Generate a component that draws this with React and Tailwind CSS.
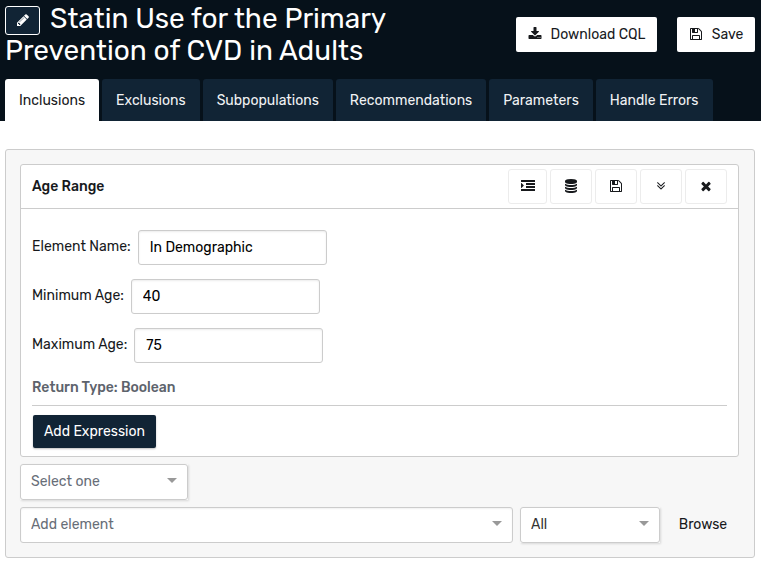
import React from "react";

const ICONS = {
  pencil:
    "M491 1536l91-91-235-235-91 91v107h128v128h107zm523-928q0-22-22-22-10 0-17 7l-542 542q-7 7-7 17 0 22 22 22 10 0 17-7l542-542q7-7 7-17zm-54-192l416 416-832 832h-416v-416zm683 96q0 53-37 90l-166 166-416-416 166-165q36-38 90-38 53 0 91 38l235 234q37 39 37 91z",
  download:
    "M1344 1344q0-26-19-45t-45-19-45 19-19 45 19 45 45 19 45-19 19-45zm256 0q0-26-19-45t-45-19-45 19-19 45 19 45 45 19 45-19 19-45zm128-224v320q0 40-28 68t-68 28h-1472q-40 0-68-28t-28-68v-320q0-40 28-68t68-28h465l135 136q58 56 136 56t136-56l136-136h464q40 0 68 28t28 68zm-325-569q17 41-14 70l-448 448q-18 19-45 19t-45-19l-448-448q-31-29-14-70 17-39 59-39h256v-448q0-26 19-45t45-19h256q26 0 45 19t19 45v448h256q42 0 59 39z",
  save: "M512 1536h768v-384h-768v384zm896 0h128v-896q0-14-10-38.5t-20-34.5l-281-281q-10-10-34-20t-39-10v416q0 40-28 68t-68 28h-576q-40 0-68-28t-28-68v-416h-128v1280h128v-416q0-40 28-68t68-28h832q40 0 68 28t28 68v416zm-384-928v-320q0-13-9.5-22.5t-22.5-9.5h-192q-13 0-22.5 9.5t-9.5 22.5v320q0 13 9.5 22.5t22.5 9.5h192q13 0 22.5-9.5t9.5-22.5zm640 32v928q0 40-28 68t-68 28h-1344q-40 0-68-28t-28-68v-1344q0-40 28-68t68-28h928q40 0 88 20t76 48l280 280q28 28 48 76t20 88z",
  indent:
    "M352 832q0 14-9 23l-288 288q-9 9-23 9-13 0-22.5-9.5t-9.5-22.5v-576q0-13 9.5-22.5t22.5-9.5q14 0 23 9l288 288q9 9 9 23zM32 1280h1728q32 0 32 32v192q0 32-32 32h-1728q-32 0-32-32v-192q0-32 32-32zM672 896h1088q32 0 32 32v192q0 32-32 32h-1088q-32 0-32-32v-192q0-32 32-32zM672 512h1088q32 0 32 32v192q0 32-32 32h-1088q-32 0-32-32v-192q0-32 32-32zM32 128h1728q32 0 32 32v192q0 32-32 32h-1728q-32 0-32-32v-192q0-32 32-32z",
  database:
    "M896 768q237 0 443-43t325-127v170q0 69-103 128t-280 93.5-385 34.5-385-34.5-280-93.5-103-128v-170q119 84 325 127t443 43zm0 768q237 0 443-43t325-127v170q0 69-103 128t-280 93.5-385 34.5-385-34.5-280-93.5-103-128v-170q119 84 325 127t443 43zm0-384q237 0 443-43t325-127v170q0 69-103 128t-280 93.5-385 34.5-385-34.5-280-93.5-103-128v-170q119 84 325 127t443 43zm0-1152q208 0 385 34.5t280 93.5 103 128v128q0 69-103 128t-280 93.5-385 34.5-385-34.5-280-93.5-103-128v-128q0-69 103-128t280-93.5 385-34.5z",
  collapse:
    "M1395 864q0 13-10 23l-466 466q-10 10-23 10t-23-10l-466-466q-10-10-10-23t10-23l50-50q10-10 23-10t23 10l393 393 393-393q10-10 23-10t23 10l50 50q10 10 10 23zm0-384q0 13-10 23l-466 466q-10 10-23 10t-23-10l-466-466q-10-10-10-23t10-23l50-50q10-10 23-10t23 10l393 393 393-393q10-10 23-10t23 10l50 50q10 10 10 23z",
  close:
    "M1490 1322q0 40-28 68l-136 136q-28 28-68 28t-68-28l-294-294-294 294q-28 28-68 28t-68-28l-136-136q-28-28-28-68t28-68l294-294-294-294q-28-28-28-68t28-68l136-136q28-28 68-28t68 28l294 294 294-294q28-28 68-28t68 28l136 136q28 28 28 68t-28 68l-294 294 294 294q28 28 28 68z",
};

function Icon({ name }) {
  return (
    <svg viewBox="0 0 1792 1792" className="mb-px size-[14px] shrink-0 fill-current" aria-hidden="true">
      <path d={ICONS[name]} />
    </svg>
  );
}

const TABS = ["Inclusions", "Exclusions", "Subpopulations", "Recommendations", "Parameters", "Handle Errors"];

const ACTIONS = [
  { icon: "indent", label: "Indent" },
  { icon: "database", label: "Value sets" },
  { icon: "save", label: "Save element" },
  { icon: "collapse", label: "Collapse" },
  { icon: "close", label: "Delete" },
];

const FIELDS = [
  { id: "element-name", label: "Element Name:", value: "In Demographic" },
  { id: "min-age", label: "Minimum Age:", value: "40" },
  { id: "max-age", label: "Maximum Age:", value: "75" },
];

function Select({ label, text, wrap, tone }) {
  return (
    <div className={`relative ${wrap}`}>
      <select
        aria-label={label}
        className={`block h-9 w-full appearance-none rounded-[3px] border border-[#ccc] bg-white pr-8 pl-[10px] ${tone}`}
      >
        <option>{text}</option>
      </select>
      <svg viewBox="0 0 10 5" className="pointer-events-none absolute top-[14px] right-[11px] h-[5px] w-[10px] fill-[#999]" aria-hidden="true">
        <path d="M0 0h10L5 5z" />
      </svg>
    </div>
  );
}

export default function App() {
  return (
    <div className="min-h-screen bg-white font-['Rubik',Roboto,sans-serif] text-sm text-[#17191c]">
      <header className="bg-[#06111a] pr-[6px] pl-[5px]">
        <div className="flex h-[79px] items-start justify-between pt-[3px]">
          <h1 className="max-w-[440px] text-[28px] leading-[31px] text-white">
            <button
              type="button"
              aria-label="Edit name"
              className="mr-[10px] inline-flex h-[29px] w-[35px] items-center justify-center rounded-[3px] border border-white bg-[#112435] align-middle"
            >
              <Icon name="pencil" />
            </button>
            Statin Use for the Primary Prevention of CVD in Adults
          </h1>
          <div className="mt-[14px] flex shrink-0 gap-5">
            <button type="button" className="flex h-[35px] w-[141px] items-center justify-center gap-[9px] rounded-[2px] bg-white">
              <Icon name="download" />
              Download CQL
            </button>
            <button type="button" className="flex h-[35px] w-[78px] items-center justify-center gap-[9px] rounded-[2px] bg-white">
              <Icon name="save" />
              Save
            </button>
          </div>
        </div>
        <nav className="flex gap-[3px]" role="tablist">
          {TABS.map((tab, i) => (
            <button
              key={tab}
              type="button"
              role="tab"
              aria-selected={i === 0}
              className={`h-[42px] rounded-t-[3px] px-[14px] pt-[2px] ${i === 0 ? "bg-white" : "bg-[#112435] text-[#f0f2f4]"}`}
            >
              {tab}
            </button>
          ))}
        </nav>
      </header>

      <main className="pt-7 pr-[6px] pl-[5px]">
        <div className="rounded-[3px] border border-[#ccc] bg-[#f7f7f7] p-[14px]">
          <section className="mr-px rounded-[3px] border border-[#ccc] bg-white">
            <div className="flex h-11 items-center justify-between border-b border-[#ccc] px-[11px]">
              <h2 className="font-medium">Age Range</h2>
              <div className="flex gap-[3px]">
                {ACTIONS.map((action, i) => (
                  <button
                    key={action.icon}
                    type="button"
                    aria-label={action.label}
                    className={`flex h-[35px] items-center justify-center rounded-[3px] border border-[#ececec] ${i === 0 ? "w-[39px]" : "w-[42px]"}`}
                  >
                    <Icon name={action.icon} />
                  </button>
                ))}
              </div>
            </div>
            <div className="px-[11px] pt-[21px] pb-2">
              <div className="flex flex-col gap-[14px]">
                {FIELDS.map((field) => (
                  <div key={field.id} className="flex items-center gap-[7px]">
                    <label htmlFor={field.id} className="pb-[2px]">
                      {field.label}
                    </label>
                    <input
                      id={field.id}
                      defaultValue={field.value}
                      className="h-[35px] w-[189px] rounded-[3px] border border-[#ccc] px-[11px] text-black shadow-[inset_0_1px_2px_rgba(0,0,0,0.08)]"
                    />
                  </div>
                ))}
              </div>
              <p className="mt-[15px] border-b border-[#ccc] pb-[7px] font-medium text-[#5d636c]">Return Type: Boolean</p>
              <button
                type="button"
                className="mt-[9px] ml-px flex h-[33px] w-[123px] items-center justify-center rounded-[2px] bg-[#112435] text-white shadow-[0_1px_2px_rgba(0,0,0,0.25)]"
              >
                Add Expression
              </button>
            </div>
          </section>
          <div className="mt-[7px]">
            <Select label="Operation" text="Select one" wrap="w-[168px] shadow-[1px_1px_2px_rgba(0,0,0,0.12)]" tone="text-[#686e78]" />
          </div>
          <div className="mt-[7px] flex items-center">
            <Select label="Add element" text="Add element" wrap="flex-1" tone="text-[#686e78] shadow-[inset_0_1px_2px_rgba(0,0,0,0.06)]" />
            <Select label="Filter" text="All" wrap="ml-[7px] w-[140px] shadow-[1px_1px_2px_rgba(0,0,0,0.12)]" tone="text-[#333]" />
            <button type="button" className="h-9 w-20 pr-3 pl-[18px]">
              Browse
            </button>
          </div>
        </div>
      </main>
    </div>
  );
}
